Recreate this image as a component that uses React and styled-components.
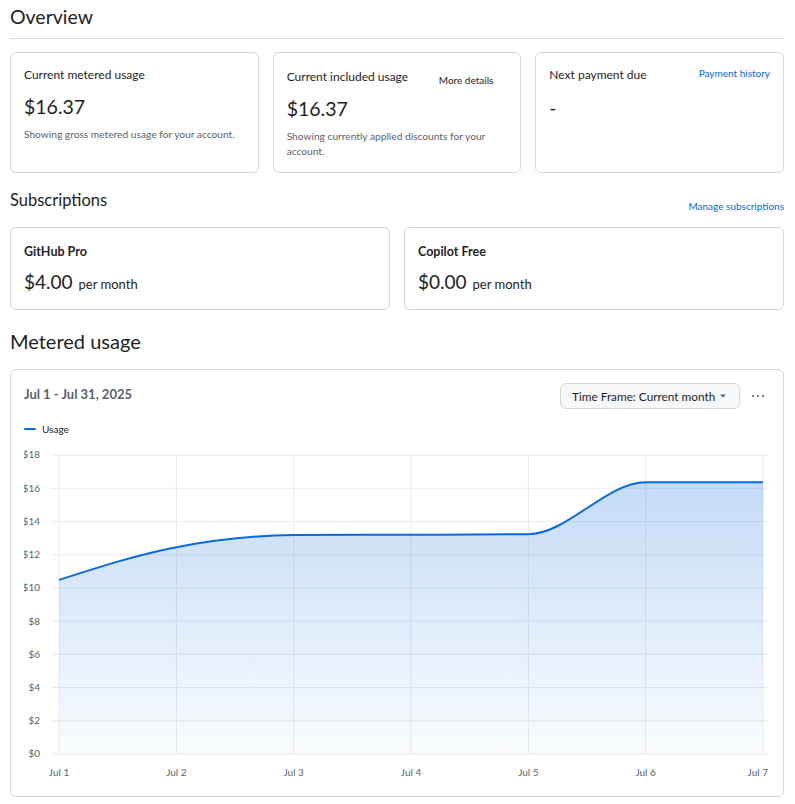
import React from 'react';
import styled, { createGlobalStyle } from 'styled-components';

const GlobalStyle = createGlobalStyle`
  body {
    margin: 0;
    background: #ffffff;
    color: #1f2328;
    font-family: Lato, "Liberation Sans", Arial, sans-serif;
  }
`;

const usage = [10.48, 12.45, 13.18, 13.2, 13.23, 16.36, 16.36];
const days = ['Jul 1', 'Jul 2', 'Jul 3', 'Jul 4', 'Jul 5', 'Jul 6', 'Jul 7'];
const ticks = [18, 16, 14, 12, 10, 8, 6, 4, 2, 0];

// chart geometry (svg local coords)
const X0 = 35;
const X1 = 738;
const Y0 = 308;
const YTOP = 9;
const sx = (i) => X0 + (i * (X1 - X0)) / (usage.length - 1);
const sy = (v) => Y0 - (v * (Y0 - YTOP)) / 18;

// monotone cubic interpolation, same idea as d3.curveMonotoneX
function monotonePath(pts) {
  const n = pts.length;
  const d = [];
  const m = [];
  for (let i = 0; i < n - 1; i++) {
    d.push((pts[i + 1][1] - pts[i][1]) / (pts[i + 1][0] - pts[i][0]));
  }
  for (let i = 1; i < n - 1; i++) {
    if (d[i - 1] * d[i] <= 0) m[i] = 0;
    else {
      const h0 = pts[i][0] - pts[i - 1][0];
      const h1 = pts[i + 1][0] - pts[i][0];
      const p = (d[i - 1] * h1 + d[i] * h0) / (h0 + h1);
      m[i] = (Math.sign(d[i - 1]) + Math.sign(d[i])) *
        Math.min(Math.abs(d[i - 1]), Math.abs(d[i]), 0.5 * Math.abs(p));
    }
  }
  // endpoints like d3: one-sided
  const h = pts[1][0] - pts[0][0];
  m[0] = ((3 * (pts[1][1] - pts[0][1])) / h - m[1]) / 2;
  const hl = pts[n - 1][0] - pts[n - 2][0];
  m[n - 1] = ((3 * (pts[n - 1][1] - pts[n - 2][1])) / hl - m[n - 2]) / 2;

  let path = `M${pts[0][0]},${pts[0][1]}`;
  for (let i = 0; i < n - 1; i++) {
    const dx = (pts[i + 1][0] - pts[i][0]) / 3;
    path += ` C${pts[i][0] + dx},${pts[i][1] + m[i] * dx} ${pts[i + 1][0] - dx},${pts[i + 1][1] - m[i + 1] * dx} ${pts[i + 1][0]},${pts[i + 1][1]}`;
  }
  return path;
}

const Page = styled.div`
  padding: 0 11px 0 10px;
`;

const PageTitle = styled.h2`
  margin: 0;
  padding: 3px 0 7px;
  font-size: 19.5px;
  font-weight: 400;
  line-height: 28px;
  border-bottom: 1px solid #d8dee4;
`;

const SectionHead = styled.div`
  display: flex;
  justify-content: space-between;
  align-items: flex-end;
  margin-top: ${(p) => p.$top}px;
`;

const SectionTitle = styled.h3`
  margin: 0;
  font-size: ${(p) => p.$size}px;
  font-weight: 400;
  line-height: ${(p) => p.$lh}px;
`;

const Link = styled.a`
  color: #0969da;
  font-size: 10px;
  text-decoration: none;
  line-height: 16px;
  white-space: nowrap;
  margin-top: ${(p) => p.$top || 0}px;
`;

const SectionLink = styled(Link)`
  line-height: 12px;
`;

const CardGrid = styled.div`
  display: grid;
  grid-template-columns: repeat(${(p) => p.$cols}, 1fr);
  gap: 14px;
  margin-top: ${(p) => p.$top}px;
`;

const Card = styled.div`
  border: 1px solid #d1d9e0;
  border-radius: 6px;
  padding: ${(p) => p.$pad};
  min-height: ${(p) => p.$min || 0}px;
  box-sizing: border-box;
`;

const CardHead = styled.div`
  display: flex;
  justify-content: space-between;
  align-items: flex-start;
  gap: 8px;
`;

const CardLabel = styled.div`
  font-size: 12px;
  line-height: 20px;
  margin-top: ${(p) => p.$top || 0}px;
`;

const SmallText = styled.span`
  font-size: 10px;
  color: #1f2328;
  line-height: 16px;
  margin: ${(p) => p.$top || 0}px 14px 0 0;
`;

const Amount = styled.div`
  font-size: 19.5px;
  line-height: 28px;
  margin-top: ${(p) => p.$top}px;
`;

const Note = styled.p`
  margin: 6px 0 0;
  font-size: 10.2px;
  line-height: 15px;
  color: #59636e;
`;

const PlanName = styled.div`
  font-size: 12.5px;
  font-weight: 700;
  line-height: 18px;
`;

const PlanPrice = styled.div`
  display: flex;
  align-items: baseline;
  gap: 6px;
  margin-top: 8px;
  font-size: 19px;
  line-height: 26px;
`;

const PerMonth = styled.span`
  font-size: 13px;
`;

const ChartCard = styled.div`
  border: 1px solid #d1d9e0;
  border-radius: 6px;
  padding: 13px 13px 10px;
  margin-top: 14px;
`;

const ChartHead = styled.div`
  display: flex;
  align-items: flex-start;
  justify-content: space-between;
`;

const Range = styled.div`
  font-size: 13px;
  font-weight: 700;
  line-height: 20px;
  color: #59636e;
  margin-top: 1px;
`;

const Actions = styled.div`
  display: flex;
  align-items: center;
  gap: 10px;
`;

const SelectButton = styled.button`
  display: flex;
  align-items: center;
  justify-content: space-between;
  width: 180px;
  height: 26px;
  padding: 0 12px 0 11px;
  border: 1px solid #d1d9e0;
  border-radius: 6px;
  background: #f6f8fa;
  color: #1f2328;
  font-family: inherit;
  font-size: 11.8px;
  white-space: nowrap;
`;

const Kebab = styled.button`
  border: 0;
  background: none;
  padding: 0 4px 0 0;
  display: flex;
  color: #59636e;
`;

const Legend = styled.div`
  display: flex;
  align-items: center;
  gap: 6px;
  margin-top: 13px;
  font-size: 10px;
  line-height: 14px;
  color: #1f2328;
`;

const LegendLine = styled.span`
  width: 12px;
  height: 2px;
  border-radius: 1px;
  background: #0969da;
`;

const ChartSvg = styled.svg`
  display: block;
  margin-top: 10px;
  font-family: Lato, "Liberation Sans", Arial, sans-serif;
  font-size: 10px;
  fill: #59636e;
`;

function UsageChart() {
  const pts = usage.map((v, i) => [sx(i), sy(v)]);
  const line = monotonePath(pts);
  const area = `${line} L${X1},${Y0} L${X0},${Y0} Z`;
  return (
    <ChartSvg width="100%" height="340" viewBox="0 0 745 340" preserveAspectRatio="none">
      <defs>
        <linearGradient id="usageFill" x1="0" y1={sy(16.4)} x2="0" y2={Y0} gradientUnits="userSpaceOnUse">
          <stop offset="0" stopColor="#0969da" stopOpacity="0.24" />
          <stop offset="1" stopColor="#0969da" stopOpacity="0.02" />
        </linearGradient>
      </defs>
      {ticks.map((t) => (
        <g key={t}>
          <line x1="28" x2="744" y1={sy(t)} y2={sy(t)} stroke="#e8ebef" strokeWidth="1" />
          <text x="16" y={sy(t) + 3.5} textAnchor="end">${t}</text>
        </g>
      ))}
      {days.map((d, i) => (
        <g key={d}>
          <line x1={sx(i)} x2={sx(i)} y1={YTOP} y2={Y0} stroke="#e8ebef" strokeWidth="1" />
          <text x={i === days.length - 1 ? sx(i) + 5 : sx(i)} y="330.5" textAnchor={i === days.length - 1 ? 'end' : 'middle'}>{d}</text>
        </g>
      ))}
      <path d={area} fill="url(#usageFill)" />
      <path d={line} fill="none" stroke="#0969da" strokeWidth="2" />
    </ChartSvg>
  );
}

export default function App() {
  return (
    <Page>
      <GlobalStyle />
      <PageTitle>Overview</PageTitle>

      <CardGrid $cols={3} $top={13}>
        <Card $pad="12px 13px 12px" $min={121}>
          <CardLabel>Current metered usage</CardLabel>
          <Amount $top={8}>$16.37</Amount>
          <Note>Showing gross metered usage for your account.</Note>
        </Card>
        <Card $pad="12px 13px 12px" $min={121}>
          <CardHead>
            <CardLabel $top={2}>Current included usage</CardLabel>
            <SmallText $top={7}>More details</SmallText>
          </CardHead>
          <Amount $top={7}>$16.37</Amount>
          <Note>Showing currently applied discounts for your account.</Note>
        </Card>
        <Card $pad="12px 13px 12px" $min={121}>
          <CardHead>
            <CardLabel>Next payment due</CardLabel>
            <Link href="#" $top={0}>Payment history</Link>
          </CardHead>
          <Amount $top={9}>-</Amount>
        </Card>
      </CardGrid>

      <SectionHead $top={15}>
        <SectionTitle $size={16.5} $lh={24}>Subscriptions</SectionTitle>
        <SectionLink href="#">Manage subscriptions</SectionLink>
      </SectionHead>

      <CardGrid $cols={2} $top={15}>
        <Card $pad="15px 13px 12px">
          <PlanName>GitHub Pro</PlanName>
          <PlanPrice>$4.00<PerMonth>per month</PerMonth></PlanPrice>
        </Card>
        <Card $pad="15px 13px 12px">
          <PlanName>Copilot Free</PlanName>
          <PlanPrice>$0.00<PerMonth>per month</PerMonth></PlanPrice>
        </Card>
      </CardGrid>

      <SectionHead $top={17}>
        <SectionTitle $size={20} $lh={28}>Metered usage</SectionTitle>
      </SectionHead>

      <ChartCard>
        <ChartHead>
          <Range>Jul 1 - Jul 31, 2025</Range>
          <Actions>
            <SelectButton>
              Time Frame: Current month
              <svg width="8" height="8" viewBox="0 0 8 8"><path d="M1 2.5h6L4 5.5z" fill="#59636e" /></svg>
            </SelectButton>
            <Kebab aria-label="More">
              <svg width="16" height="16" viewBox="0 0 16 16" fill="currentColor">
                <circle cx="3" cy="8" r="1.1" />
                <circle cx="8" cy="8" r="1.1" />
                <circle cx="13" cy="8" r="1.1" />
              </svg>
            </Kebab>
          </Actions>
        </ChartHead>
        <Legend>
          <LegendLine />
          Usage
        </Legend>
        <UsageChart />
      </ChartCard>
    </Page>
  );
}
